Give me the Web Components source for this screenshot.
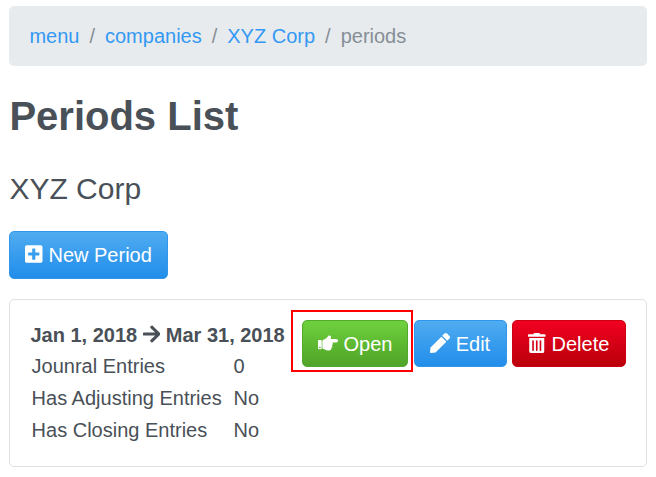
<!DOCTYPE html>
<html lang="en">
<head>
<meta charset="utf-8">
<title>Periods List</title>
<style>
body{margin:0;background:#fff;color:#495057;font:20px/30px "Liberation Sans",Arial,sans-serif}
</style>
</head>
<body>
<periods-page></periods-page>
<script>
const ICONS = {
  plus: [448, 'M400 32H48C21.5 32 0 53.5 0 80v352c0 26.5 21.5 48 48 48h352c26.5 0 48-21.5 48-48V80c0-26.5-21.5-48-48-48zm-32 252c0 6.6-5.4 12-12 12h-92v92c0 6.6-5.4 12-12 12h-56c-6.6 0-12-5.4-12-12v-92H92c-6.6 0-12-5.4-12-12v-56c0-6.6 5.4-12 12-12h92v-92c0-6.6 5.4-12 12-12h56c6.6 0 12 5.4 12 12v92h92c6.6 0 12 5.4 12 12v56z'],
  arrow: [448, 'M190.5 66.9l22.2-22.2c9.4-9.4 24.6-9.4 33.9 0L441 239c9.4 9.4 9.4 24.6 0 33.9L246.6 467.3c-9.4 9.4-24.6 9.4-33.9 0l-22.2-22.2c-9.5-9.5-9.3-25 .4-34.3L311.4 296H24c-13.3 0-24-10.7-24-24v-32c0-13.3 10.7-24 24-24h287.4L190.9 101.2c-9.8-9.3-10-24.8-.4-34.3z'],
  pen: [512, 'M290.74 93.24l128.02 128.02-277.99 277.99-114.14 12.6C11.35 513.54-1.56 500.62.14 485.34l12.7-114.22 277.9-277.88zm207.2-19.06l-60.11-60.11c-18.75-18.75-49.16-18.75-67.91 0l-56.55 56.55 128.02 128.02 56.55-56.55c18.75-18.76 18.75-49.16 0-67.91z'],
  trash: [448, 'M32 464a48 48 0 0 0 48 48h288a48 48 0 0 0 48-48V128H32zm266-264a21 16 0 0 1 42 0v244a21 16 0 0 1-42 0zm-95 0a21 16 0 0 1 42 0v244a21 16 0 0 1-42 0zm-95 0a21 16 0 0 1 42 0v244a21 16 0 0 1-42 0zM432 32H312l-9.4-18.7A24 24 0 0 0 281.1 0H166.8a23.7 23.7 0 0 0-21.4 13.3L136 32H16A16 16 0 0 0 0 48v32a16 16 0 0 0 16 16h416a16 16 0 0 0 16-16V48a16 16 0 0 0-16-16z'],
  hand: [512, 'M512 199.652c0 23.625-20.65 43.826-44.8 43.826h-99.851c16.34 17.048 18.346 49.766-6.299 70.944 14.288 22.829 2.147 53.017-16.45 62.315C353.574 425.878 322.654 448 272 448c-2.746 0-13.276-.203-16-.195-61.971.168-76.894-31.065-123.731-38.315C120.596 407.683 112 397.599 112 385.786V214.261l.002-.001c.011-18.366 10.607-35.889 28.464-43.845 28.886-12.994 95.413-49.038 107.534-77.323 7.797-18.194 21.384-29.084 40-29.092 34.222-.014 57.752 35.098 44.119 66.908-3.583 8.359-8.312 16.67-14.153 24.918H467.2c23.45 0 44.8 20.543 44.8 43.826zM96 200v192c0 13.255-10.745 24-24 24H24c-13.255 0-24-10.745-24-24V200c0-13.255 10.745-24 24-24h48c13.255 0 24 10.745 24 24zM68 368c0-11.046-8.954-20-20-20s-20 8.954-20 20 8.954 20 20 20 20-8.954 20-20z']
};

function define(name, html) {
  customElements.define(name, class extends HTMLElement {
    constructor() {
      super();
      this.attachShadow({mode: 'open'}).innerHTML = html;
    }
  });
}

customElements.define('fa-icon', class extends HTMLElement {
  connectedCallback() {
    if (this.shadowRoot) return;
    const [w, d] = ICONS[this.getAttribute('name')];
    this.attachShadow({mode: 'open'}).innerHTML = `
      <style>:host{display:inline-block;height:20px;vertical-align:-2px;line-height:1}svg{display:block;height:20px;width:${w / 25.6}px}</style>
      <svg viewBox="0 0 ${w} 512" fill="currentColor" aria-hidden="true"><path d="${d}"/></svg>`;
  }
});

define('crumb-item', `
  <style>
    :host{display:flex;color:#3399f3}
    :host([current]){color:#868e96}
    :host(:not(:first-child))::before{content:"/";color:#868e96;padding:0 10px}
  </style><slot></slot>`);

define('crumb-bar', `
  <style>:host{display:flex;box-sizing:border-box;height:60px;padding:15px 20px;background:#e7ebee;border-radius:5px}</style>
  <slot></slot>`);

define('app-button', `
  <style>
    :host{display:block;box-sizing:border-box;width:max-content;height:47px;padding:8px 15.5px 7px 15.2px;border:1px solid #2f96ec;border-radius:5px;
      background:linear-gradient(#50acf0,#3399ed 60%,#228eea);color:#fff;white-space:nowrap}
    :host([kind=success]){border-color:#53a92b;background:linear-gradient(#6fd13f,#5bb52f 60%,#51a42a);padding-inline:15px}
    :host([kind=danger]){border-color:#cc0010;background:linear-gradient(#f20022,#cf0013 60%,#ba000b)}
    :host([tall]){height:48px;padding-inline:15px}
  </style><slot></slot>`);

define('entry-table', `
  <style>:host{display:grid;grid-template-columns:202px auto;grid-auto-rows:32px;align-items:center;padding-left:1.2px}</style>
  <slot></slot>`);

define('call-out', `
  <style>
    :host{display:block;position:relative}
    i{position:absolute;inset:-10px -5px -5px -11px;border:2px solid #f00;pointer-events:none}
  </style><slot></slot><i></i>`);

define('period-card', `
  <style>
    :host{display:flex;box-sizing:border-box;height:168px;padding:20px;border:1px solid #dfdfdf;border-radius:5px;align-items:flex-start}
    .info{width:271.5px;flex:none;white-space:nowrap}
    .title{font-weight:bold;height:30px}
    .actions{display:flex;gap:5.6px}
  </style>
  <div class="info"><div class="title"><slot name="title"></slot></div><slot></slot></div>
  <div class="actions"><slot name="actions"></slot></div>`);

define('periods-page', `
  <style>
    :host{display:block;box-sizing:border-box;padding:6px 9px 0 9.4px}
    h1{margin:26px 0 0;font-size:40px;line-height:48px;font-weight:bold}
    h2{margin:31px 0 0;font-size:30px;line-height:36px;font-weight:400}
    app-button[tall]{margin:24px 0 20px}
  </style>
  <crumb-bar><crumb-item>menu</crumb-item><crumb-item>companies</crumb-item><crumb-item>XYZ Corp</crumb-item><crumb-item current>periods</crumb-item></crumb-bar>
  <h1>Periods List</h1>
  <h2>XYZ Corp</h2>
  <app-button tall><fa-icon name="plus"></fa-icon> New Period</app-button>
  <period-card>
    <span slot="title">Jan 1, 2018 <fa-icon name="arrow"></fa-icon> Mar 31, 2018</span>
    <entry-table>
      <span>Jounral Entries</span><span>0</span>
      <span>Has Adjusting Entries</span><span>No</span>
      <span>Has Closing Entries</span><span>No</span>
    </entry-table>
    <call-out slot="actions"><app-button kind="success"><fa-icon name="hand"></fa-icon> Open</app-button></call-out>
    <app-button slot="actions"><fa-icon name="pen"></fa-icon> Edit</app-button>
    <app-button slot="actions" kind="danger"><fa-icon name="trash"></fa-icon> Delete</app-button>
  </period-card>`);
</script>
</body>
</html>
